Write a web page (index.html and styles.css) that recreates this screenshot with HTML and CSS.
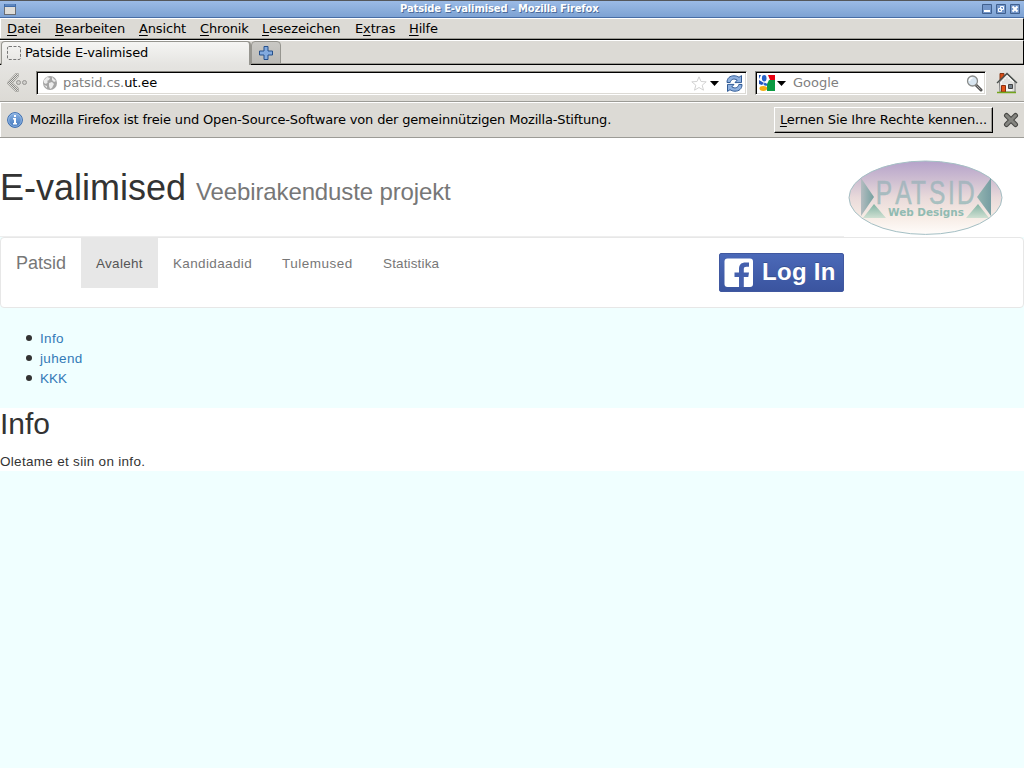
FILE: index.html
```html
<!DOCTYPE html>
<html lang="de">
<head>
<meta charset="utf-8">
<title>Patside E-valimised</title>
<link rel="stylesheet" href="styles.css">
</head>
<body>
<div class="titlebar">
  <svg class="win-icon" width="12" height="11" viewBox="0 0 12 11"><rect x=".5" y=".5" width="11" height="10" fill="#deddd9" stroke="#6b6e73"/><path d="M0 0h12v3H0z" fill="#3f6ba8"/><path d="M1 1h10" stroke="#7da2d5"/></svg>
  <span class="title">Patside E-valimised - Mozilla Firefox</span>
  <svg class="win-buttons" width="38" height="10" viewBox="0 0 38 10" fill="none"><path d="M.5.5h9v9h-9zM14.500.5h9v9h-9zM28.500.5h9v9h-9z" fill="#7396ca" stroke="#40608f"/><path d="M2 7h6" stroke="#fff" stroke-width="2"/><path d="M18.500 2.500h3v3h-3zM16.500 4.500h3v3h-3z" stroke="#fff"/><path d="M30.500 2.500l5 5m0-5l-5 5" stroke="#fff" stroke-width="2"/></svg>
</div>
<div class="menubar">
  <span class="m1"><u>D</u>atei</span><span class="m2"><u>B</u>earbeiten</span><span class="m3"><u>A</u>nsicht</span><span class="m4"><u>C</u>hronik</span><span class="m5"><u>L</u>esezeichen</span><span class="m6">E<u>x</u>tras</span><span class="m7"><u>H</u>ilfe</span>
</div>
<div class="tabs">
  <div class="tab">
    <svg width="14" height="14" viewBox="0 0 14 14"><rect x=".5" y=".5" width="13" height="13" rx="1.500" fill="none" stroke="#777" stroke-dasharray="3 1.500"/></svg>
    <span>Patside E-valimised</span>
  </div>
  <div class="new-tab"><svg width="14" height="14" viewBox="0 0 14 14"><path d="M5 .5h4V5h4.500v4H9v4.500H5V9H.5V5H5z" fill="#82aade" stroke="#25508c"/></svg></div>
</div>
<div class="toolbar">
  <svg class="back" width="22" height="20" viewBox="0 0 22 20"><defs><pattern id="dots" width="2" height="2" patternUnits="userSpaceOnUse"><path d="M0 0h1v1H0zM1 1h1v1H1z" fill="#8a8a87"/></pattern></defs><path d="M8.500.5h3v3L5.500 10l6 5v3.500h-3L-.2 10z" fill="url(#dots)" stroke="#aaa9a5" stroke-width=".7"/><circle cx="11.500" cy="9.500" r="2" fill="#cfcecb" stroke="#969592"/><circle cx="17.500" cy="9.500" r="2" fill="#cfcecb" stroke="#969592"/></svg>
  <div class="field url">
    <svg width="14" height="14" viewBox="0 0 14 14"><circle cx="7" cy="7" r="7" fill="#a5a5a5"/><path d="M1 4l3-3 3 1-1 2-2 1 1 1-2 2-2-1zM9 1l4 4-2 1-2-2zM6 7l3-1 2 2-2 4-2 1-1-3zM1 9l3 1v2z" fill="#ececec"/></svg>
    <span class="address">patsid.cs.<b>ut.ee</b></span>
    <svg class="star" width="16" height="15" viewBox="0 0 16 15"><path d="M8 .8l2 4.700 5.200.3-4 3.400 1.300 5-4.500-2.700-4.500 2.700 1.300-5-4-3.400 5.200-.3z" fill="#fff" stroke="#d2d2d2"/></svg>
    <svg class="arrow" width="9" height="5" viewBox="0 0 9 5"><path d="M0 0h9L4.500 5z"/></svg>
    <svg class="reload" width="17" height="17" viewBox="0 0 17 17" fill="#8eb0df" stroke="#325c96"><path d="M1 7.500C1 3 4 .8 8 .8c2 0 3.500.5 5 1.500L15.500.6v7H9l2.200-2.500C8 3.200 5 4 4.200 7.500z"/><path d="M16 9.500c0 4.500-3 6.700-7 6.700-2 0-3.500-.5-5-1.500l-2.500 1.700v-7H8L5.800 11.900c3.200 1.900 6.200 1.100 7-2.400z"/></svg>
  </div>
  <div class="field search">
    <svg width="16" height="16" viewBox="0 0 16 16"><path d="M0 0h16v16H0z" fill="#fff"/><path d="M9 0h7v5h-5z" fill="#e90010"/><path d="M10 5h6v11H8V9z" fill="#0c9b43"/><path d="M0 0h2L0 4zM0 5l5 3-2 2-3-1z" fill="#2355bd"/><ellipse cx="5.200" cy="3.300" rx="2.300" ry="3.200" fill="#2863c8"/><path d="M5.500 7.500l3 1.500-1 2-3-1z" fill="#2863c8"/><ellipse cx="4.300" cy="13.500" rx="3.800" ry="2.400" fill="#f5ae13"/></svg>
    <svg class="arrow" width="9" height="5" viewBox="0 0 9 5"><path d="M0 0h9L4.500 5z"/></svg>
    <span>Google</span>
    <svg class="lens" width="17" height="17" viewBox="0 0 17 17"><path d="M10 10l5 5" stroke="#555" stroke-width="3" stroke-linecap="round"/><path d="M10.500 10.500l4 4" stroke="#aaa"/><circle cx="6.500" cy="6" r="5" fill="#d9e6f1" stroke="#8a8c8a" stroke-width="1.300"/><path d="M3.500 6a3 3 0 0 1 3-3" fill="none" stroke="#fff" stroke-width="1.500"/></svg>
  </div>
  <svg class="home" width="22" height="22" viewBox="0 0 22 22"><path d="M4 1.500h4V8H4z" fill="#d94d16" stroke="#863615"/><path d="M3.500 10L11 2l8 8v10h-15z" fill="#f2f2ef" stroke="#777"/><path d="M7 9v10M9 7v5M11 5v7M13 7v5M15 9v3M17 10v9" stroke="#cececb"/><path d="M1 11L11 1.500 21 11" fill="none" stroke="#4b514e" stroke-width="1.400"/><path d="M5.500 13.500h4V20h-4z" fill="#e55316" stroke="#8b2f0f"/><path d="M12.500 12.500h4v4h-4z" fill="#75818b" stroke="#444"/><path d="M1 20.500h19" stroke="#73a61c" stroke-width="1.500"/></svg>
</div>
<div class="notice">
  <svg width="16" height="16" viewBox="0 0 16 16"><defs><linearGradient id="blue" x2="0" y2="1"><stop stop-color="#89b1e2"/><stop offset="1" stop-color="#4278bd"/></linearGradient></defs><circle cx="8" cy="8" r="7.400" fill="url(#blue)" stroke="#3b6daf"/><circle cx="8" cy="8" r="6.400" fill="none" stroke="#a8c5e9" stroke-width=".7"/><path d="M7 3h2v2H7zM6 6h3v5h1v1.500H6V11h1V7.500H6z" fill="#fff"/></svg>
  <span class="message">Mozilla Firefox ist freie und Open-Source-Software von der gemeinnützigen Mozilla-Stiftung.</span>
  <button class="rights"><u>L</u>ernen Sie Ihre Rechte kennen...</button>
  <svg class="close" width="16" height="16" viewBox="0 0 16 16"><path d="M3.500 3.500l9 9m0-9l-9 9" stroke="#474744" stroke-width="5" stroke-linecap="round"/><path d="M3.500 3.500l9 9m0-9l-9 9" stroke="#858580" stroke-width="3" stroke-linecap="round"/></svg>
</div>
<main class="page">
  <header class="header">
    <div class="page-header"><h1>E-valimised <small>Veebirakenduste projekt</small></h1></div>
    <svg class="logo" width="156" height="77" viewBox="848 160 156 77">
      <defs><linearGradient id="oval" x2="0" y2="1"><stop stop-color="#b5a2ca"/><stop offset=".25" stop-color="#cdbdd1"/><stop offset=".5" stop-color="#e9dada"/><stop offset=".75" stop-color="#f6ebe4"/><stop offset="1" stop-color="#fffdfb"/></linearGradient>
      <linearGradient id="side-l"><stop stop-color="#b4bcc0"/><stop offset="1" stop-color="#74a09f"/></linearGradient>
      <linearGradient id="side-r"><stop stop-color="#94b5b1"/><stop offset="1" stop-color="#769da2"/></linearGradient>
      <linearGradient id="foot" x2="0" y2="1"><stop stop-color="#83b3a4"/><stop offset="1" stop-color="#cfe0d2"/></linearGradient>
      <linearGradient id="word" x2="0" y2="1"><stop stop-color="#a8aebf"/><stop offset="1" stop-color="#a8c7c0"/></linearGradient></defs>
      <ellipse cx="925.500" cy="197.700" rx="76.500" ry="36.700" fill="url(#oval)" stroke="#a4bfc4"/>
      <path d="M861 178l13 19-13 19z" fill="url(#side-l)"/><path d="M991 178l-14 19 14 19z" fill="url(#side-r)"/><path d="M863 218l11-14 12 14zM966 218l12-14 11 14z" fill="url(#foot)"/>
      <text class="logo-name" transform="scale(.72 1)" x="1216.200 1243.300 1265.300 1290.200 1316.600 1329.200" y="204">PATSID</text>
      <text class="logo-sub" x="888" y="216" textLength="76" lengthAdjust="spacingAndGlyphs">Web Designs</text>
    </svg>
  </header>
  <nav class="navbar">
    <a class="brand">Patsid</a>
    <a class="item active n1">Avaleht</a><a class="item n2">Kandidaadid</a><a class="item n3">Tulemused</a><a class="item n4">Statistika</a>
    <div class="login">
      <svg width="30" height="30" viewBox="0 0 30 30"><rect x=".5" y=".5" width="28.500" height="28.500" rx="3" fill="#fff"/><path d="M15 29V19h-4.500v-4.500H15V11c0-4.500 2.500-6.500 6.500-6.500H25v4.300h-2.500c-2 0-2.700.7-2.700 2.500v3.200H25l-.7 4.500h-4.500v10z" fill="#4560ad"/></svg>
      <span>Log In</span>
    </div>
  </nav>
  <ul class="links"><li><a class="l1">Info</a></li><li><a class="l2">juhend</a></li><li><a class="l3">KKK</a></li></ul>
  <section class="content"><h2>Info</h2><p>Oletame et siin on info.</p></section>
</main>
</body>
</html>
```
FILE: styles.css
```css
* { box-sizing: border-box; }
body { margin: 0; width: 1024px; height: 768px; overflow: hidden; background: #f0ffff; font: 13px/18px "DejaVu Sans", sans-serif; color: #000; white-space: nowrap; }
svg { display: block; flex: none; }
u { text-decoration: underline; text-underline-offset: 2px; text-decoration-thickness: 1px; text-decoration-skip-ink: none; }
.titlebar { display: flex; height: 18px; align-items: center; padding: 0 4px; border-top: 1px solid #54575b; border-bottom: 1px solid #476da5; background: linear-gradient(#9bbbe6, #7da2d3); }
.title { margin-left: 384px; color: #fff; font-size: 10px; letter-spacing: -.15px; font-weight: bold; line-height: 16px; text-shadow: 1px 1px #4c6b9a; }
.win-buttons { margin-left: auto; }
.menubar { display: flex; height: 22px; padding: 1px 0 0 7px; border: solid; border-width: 1px 1px 1px 0; border-color: #fff #000 #000 #fff; background: #dcdad5; box-shadow: inset 0 -1px #9d9c96, inset 1px 0 #fff; letter-spacing: -.14px; }
.menubar span { flex: none; }
.m1 { width: 48px; } .m2 { width: 84px; } .m3 { width: 61px; } .m4 { width: 62px; } .m5 { width: 93px; } .m6 { width: 54px; }
.tabs { display: flex; height: 25px; border-top: 1px solid #fff; border-bottom: 1px solid #000; border-right: 1px solid #000; background: #dcdad5; box-shadow: inset 0 -1px #9d9c96; }
.tab { display: flex; align-items: center; gap: 4px; width: 250px; height: 24px; margin-left: 1px; padding: 0 0 1px 5px; border: 1px solid #96958f; border-width: 1px 2px 0 1px; border-radius: 4px 4px 0 0; background: linear-gradient(#f5f5f3, #e5e4e1); letter-spacing: -.14px; }
.new-tab { display: flex; align-items: center; justify-content: center; width: 30px; height: 23px; border: 1px solid #96958f; border-radius: 4px 4px 0 0; background: linear-gradient(#c9c8c4, #bcbbb7); }
.toolbar { display: flex; align-items: center; height: 37px; padding: 0 6px 1px 7px; border-bottom: 1px solid #9c9b96; background: linear-gradient(#e5e4e1, #dcdad5); }
.field { display: flex; align-items: center; height: 24px; margin-top: 1px; border: 1px solid; border-color: #85847e #fff #fff #85847e; background: #fff; box-shadow: inset 1px 1px #000, inset -1px -1px #dcdad5; }
.url { width: 711px; margin-left: 7px; padding: 0 3px 0 6px; }
.address { margin-left: 6px; color: #808080; letter-spacing: -.1px; }
.address b { font-weight: normal; color: #000; }
.star { margin-left: auto; }
.url .arrow { margin: 0 7px 0 3px; }
.search { width: 231px; margin-left: 8px; padding: 0 2px 0 3px; color: #808080; }
.search .arrow { margin: 0 7px 0 2px; }
.lens { margin-left: auto; }
.home { margin-left: auto; }
.notice { display: flex; align-items: center; height: 36px; padding: 0 5px 0 7px; border-top: 1px solid #fff; border-bottom: 1px solid #9c9b96; background: #dcdad5; box-shadow: inset 1px 0 #fff; }
.message { margin-left: 7px; letter-spacing: -.164px; }
.rights { width: 219px; height: 26px; margin: 0 10px 0 auto; padding: 0; border: solid; border-width: 1px; border-color: #fff #000 #000 #fff; background: #dcdad5; box-shadow: inset -1px -1px #9c9b96; font: 13px/18px "DejaVu Sans", sans-serif; letter-spacing: -.13px; color: #000; }
.page { font-family: "Liberation Sans", Arial, sans-serif; font-size: 13.5px; line-height: 20px; color: #333; }
.header { display: flex; height: 99px; background: #fff; }
.page-header { width: 844px; border-bottom: 1px solid #eee; }
h1 { margin: 30px 0 0; font-size: 36px; font-weight: normal; line-height: 40px; }
small { font-size: 24px; letter-spacing: -.13px; color: #777; }
.logo { margin: 22px 0 0 4px; }
.logo-name { font: 34px "Liberation Sans", Arial, sans-serif; fill: url(#word); stroke: #a5b9be; stroke-width: .5; }
.logo-sub { font: bold 10px "DejaVu Sans", sans-serif; fill: #91bbb2; }
.navbar { display: flex; align-items: flex-start; height: 71px; border: 1px solid #e7e7e7; border-radius: 4px; background: #fff; color: #777; }
.brand { width: 80px; padding: 15px 0 0 15px; font-size: 18px; }
.item { height: 50px; padding: 16px 0 0 15px; }
.active { background: #e7e7e7; color: #555; }
.n1 { width: 77px; letter-spacing: .3px; }
.n2 { width: 109px; letter-spacing: .36px; }
.n3 { width: 101px; letter-spacing: .5px; }
.n4 { width: 87px; letter-spacing: .14px; }
.login { display: flex; align-items: center; width: 125px; height: 39px; margin: 15px 179px 0 auto; padding-left: 4px; border: 1px solid #4058a0; border-radius: 2px; background: linear-gradient(#4b69b8, #3a549f); color: #fff; font-size: 24px; font-weight: bold; line-height: 36px; text-shadow: 0 -1px #35508f; }
.login span { margin: -2px 0 0 8px; letter-spacing: .3px; }
.links { height: 100px; margin: 0; padding: 20px 0 0 26px; list-style: none; }
.links li { display: flex; align-items: center; gap: 8px; height: 20px; }
.links li::before { content: ""; width: 6px; height: 6px; border-radius: 50%; background: #333; }
.links a { padding-top: 2px; color: #337ab7; letter-spacing: .35px; }
.links .l3 { letter-spacing: 0; }
.content { height: 63px; background: #fff; }
h2 { margin: 0; padding-bottom: 12px; font-size: 30px; font-weight: normal; line-height: 32px; }
p { margin: 0; letter-spacing: .3px; }
```
